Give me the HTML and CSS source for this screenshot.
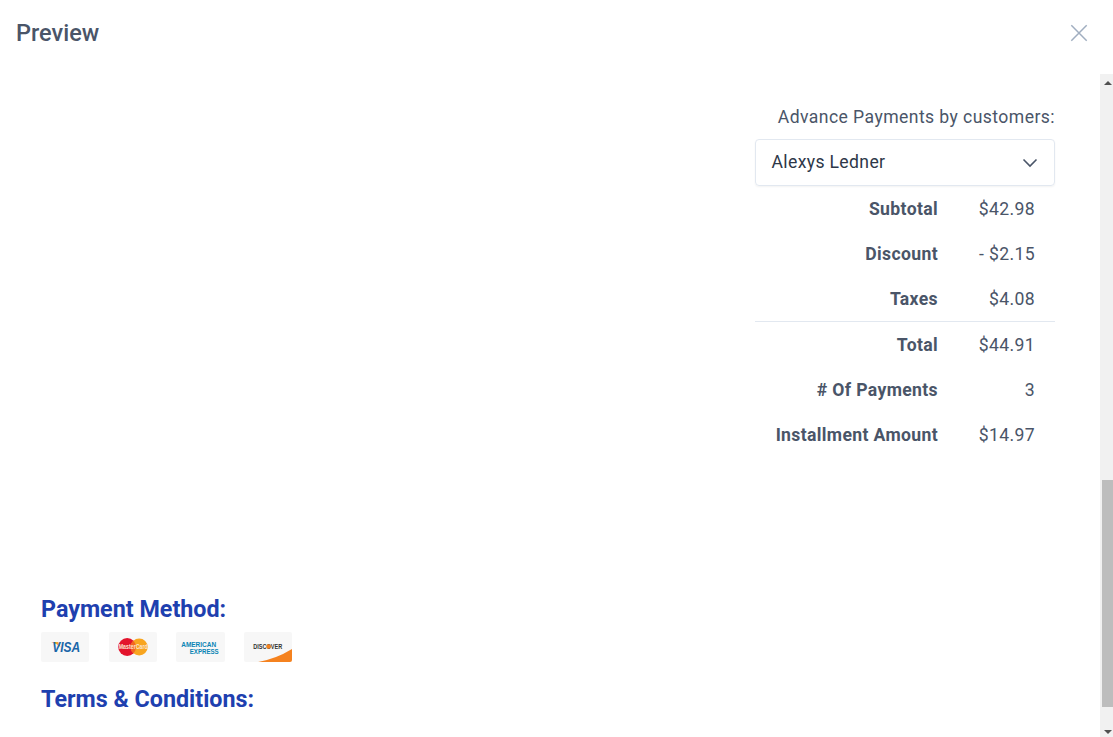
FILE: index.html
```html
<!DOCTYPE html>
<html>
<head>
    <title>Preview</title>
    <link rel="stylesheet" href="styles.css">
</head>
<body>
    <div class="modal">
        <div class="modal-header">
            <h2>Preview</h2>
            <svg class="close-icon" width="20" height="20" viewBox="0 0 20 20">
                <path d="M2.3 2.3L17.7 17.7M17.7 2.3L2.3 17.7" stroke="#a0aec0" stroke-width="1.5" fill="none"/>
            </svg>
        </div>

        <div class="modal-body">
            <div class="content">
                <div class="totals-wrapper">
                    <div class="totals">
                        <label>Advance Payments by customers:</label>
                        <div class="select-box">
                            <span>Alexys Ledner</span>
                            <svg width="18" height="18" viewBox="0 0 18 18">
                                <path d="M2.5 5.5L9 12L15.5 5.5" stroke="#4a5568" stroke-width="1.6" fill="none"/>
                            </svg>
                        </div>
                        <table>
                            <tr><th>Subtotal</th><td>$42.98</td></tr>
                            <tr><th>Discount</th><td>- $2.15</td></tr>
                            <tr class="before-line"><th>Taxes</th><td>$4.08</td></tr>
                            <tr class="after-line"><th>Total</th><td>$44.91</td></tr>
                            <tr class="after-line"><th># Of Payments</th><td>3</td></tr>
                            <tr class="after-line"><th>Installment Amount</th><td>$14.97</td></tr>
                        </table>
                    </div>
                </div>

                <h3>Payment Method:</h3>
                <div class="cards">
                    <div class="card">
                        <svg viewBox="0 0 48 30">
                            <path d="M10 10L17 10L19.5 15.5Q16 11.5 10 10Z" fill="#f0a630"/>
                            <text x="11" y="20" class="visa-text" textLength="28" lengthAdjust="spacingAndGlyphs">VISA</text>
                        </svg>
                    </div>
                    <div class="card">
                        <svg viewBox="0 0 48 30">
                            <circle cx="18" cy="15" r="9" fill="#e3132c"/>
                            <circle cx="30" cy="15" r="8.5" fill="#f8a51f"/>
                            <path d="M24 8.5A9 9 0 0 1 24 21.5A9 9 0 0 1 24 8.5Z" fill="#f26622"/>
                            <text x="9.5" y="17" class="mc-text" textLength="29" lengthAdjust="spacingAndGlyphs">MasterCard</text>
                        </svg>
                    </div>
                    <div class="card">
                        <svg viewBox="0 0 48 30">
                            <text x="5" y="14.5" class="amex-text" textLength="35" lengthAdjust="spacingAndGlyphs">AMERICAN</text>
                            <text x="13.5" y="21.5" class="amex-text" textLength="29" lengthAdjust="spacingAndGlyphs">EXPRESS</text>
                        </svg>
                    </div>
                    <div class="card">
                        <svg viewBox="0 0 48 30">
                            <path d="M14 30Q32 27 48 17L48 30Z" fill="#f5821f"/>
                            <text x="9" y="17" class="discover-text" textLength="29" lengthAdjust="spacingAndGlyphs">DISCOVER</text>
                            <circle cx="24.5" cy="14.5" r="2.2" fill="#f5821f"/>
                        </svg>
                    </div>
                </div>

                <h3 class="terms">Terms &amp; Conditions:</h3>
            </div>

            <div class="scrollbar">
                <div class="arrow arrow-up"></div>
                <div class="thumb"></div>
                <div class="arrow arrow-down"></div>
            </div>
        </div>
    </div>
</body>
</html>
```

FILE: styles.css
```css
* {
    box-sizing: border-box;
}

html, body {
    margin: 0;
    height: 100%;
    overflow: hidden;
}

body {
    font-family: Roboto, "Liberation Sans", sans-serif;
    background-color: #fff;
    color: #4a5568;
}

.modal {
    height: 737px;
    display: flex;
    flex-direction: column;
}

.modal-header {
    height: 74px;
    flex: none;
    display: flex;
    align-items: center;
    justify-content: space-between;
    padding: 0 24px 8px 16px;
}

.modal-header h2 {
    margin: 0;
    font-size: 23.5px;
    font-weight: 500;
    line-height: 28px;
}

.modal-body {
    flex: 1;
    display: flex;
    min-height: 0;
}

.content {
    flex: 1;
    padding: 30px 45px 0 41px;
}

.totals-wrapper {
    display: flex;
    justify-content: flex-end;
    height: 491px;
}

.totals {
    width: 300px;
}

.totals label {
    display: block;
    text-align: right;
    font-size: 17.6px;
    line-height: 26px;
    letter-spacing: 0.024em;
}

.select-box {
    height: 47px;
    margin-top: 9px;
    padding: 0 15px 2px 15.5px;
    display: flex;
    align-items: center;
    justify-content: space-between;
    border: 1px solid #e2e8f0;
    border-radius: 4px;
    box-shadow: 0 1px 2px rgba(0, 0, 0, 0.05);
    font-size: 17.6px;
    letter-spacing: 0.02em;
    color: #2d3748;
}

.select-box svg {
    margin-top: 2px;
}

table {
    border-collapse: collapse;
    width: 100%;
    font-size: 17.6px;
    letter-spacing: 0.02em;
}

th, td {
    height: 45px;
    padding: 0 20px 0 0;
    text-align: right;
}

th {
    font-weight: 700;
}

td {
    width: 97px;
    font-weight: 400;
}

.before-line th, .before-line td {
    border-bottom: 1px solid #e2e8f0;
    padding-top: 2px;
}

.after-line th, .after-line td {
    padding-top: 2px;
}

h3 {
    margin: 0;
    font-size: 23.3px;
    font-weight: 700;
    line-height: 28px;
    color: #1e40af;
}

.cards {
    display: flex;
    gap: 19.3px;
    margin-top: 9px;
}

.card {
    width: 48.4px;
    height: 30px;
    background-color: #f7f7f7;
    border-radius: 2px;
    overflow: hidden;
}

.card svg {
    display: block;
    width: 100%;
    height: 100%;
}

.terms {
    margin-top: 23px;
}

.visa-text {
    font-family: "Liberation Sans", sans-serif;
    font-size: 14px;
    font-weight: 700;
    font-style: italic;
    fill: #1a66a8;
}

.mc-text {
    font-family: "Liberation Sans", sans-serif;
    font-size: 6.5px;
    font-weight: 700;
    fill: #fbe3d0;
}

.amex-text {
    font-family: "Liberation Sans", sans-serif;
    font-size: 6.8px;
    font-weight: 700;
    fill: #0a85b5;
}

.discover-text {
    font-family: "Liberation Sans", sans-serif;
    font-size: 7px;
    font-weight: 700;
    fill: #333;
}

.scrollbar {
    width: 13px;
    flex: none;
    background-color: #f1f1f1;
    display: flex;
    flex-direction: column;
    align-items: flex-end;
}

.arrow {
    height: 17px;
    width: 11px;
    flex: none;
    position: relative;
}

.arrow-up::after, .arrow-down::after {
    content: "";
    position: absolute;
    left: 2px;
    border-left: 4px solid transparent;
    border-right: 4px solid transparent;
}

.arrow-up::after {
    top: 7px;
    border-bottom: 4px solid #505050;
}

.arrow-down::after {
    bottom: 3px;
    border-top: 4px solid #505050;
}

.thumb {
    width: 11px;
    height: 227px;
    margin-top: 389px;
    margin-bottom: 13px;
    background-color: #bdbdbd;
}
```
